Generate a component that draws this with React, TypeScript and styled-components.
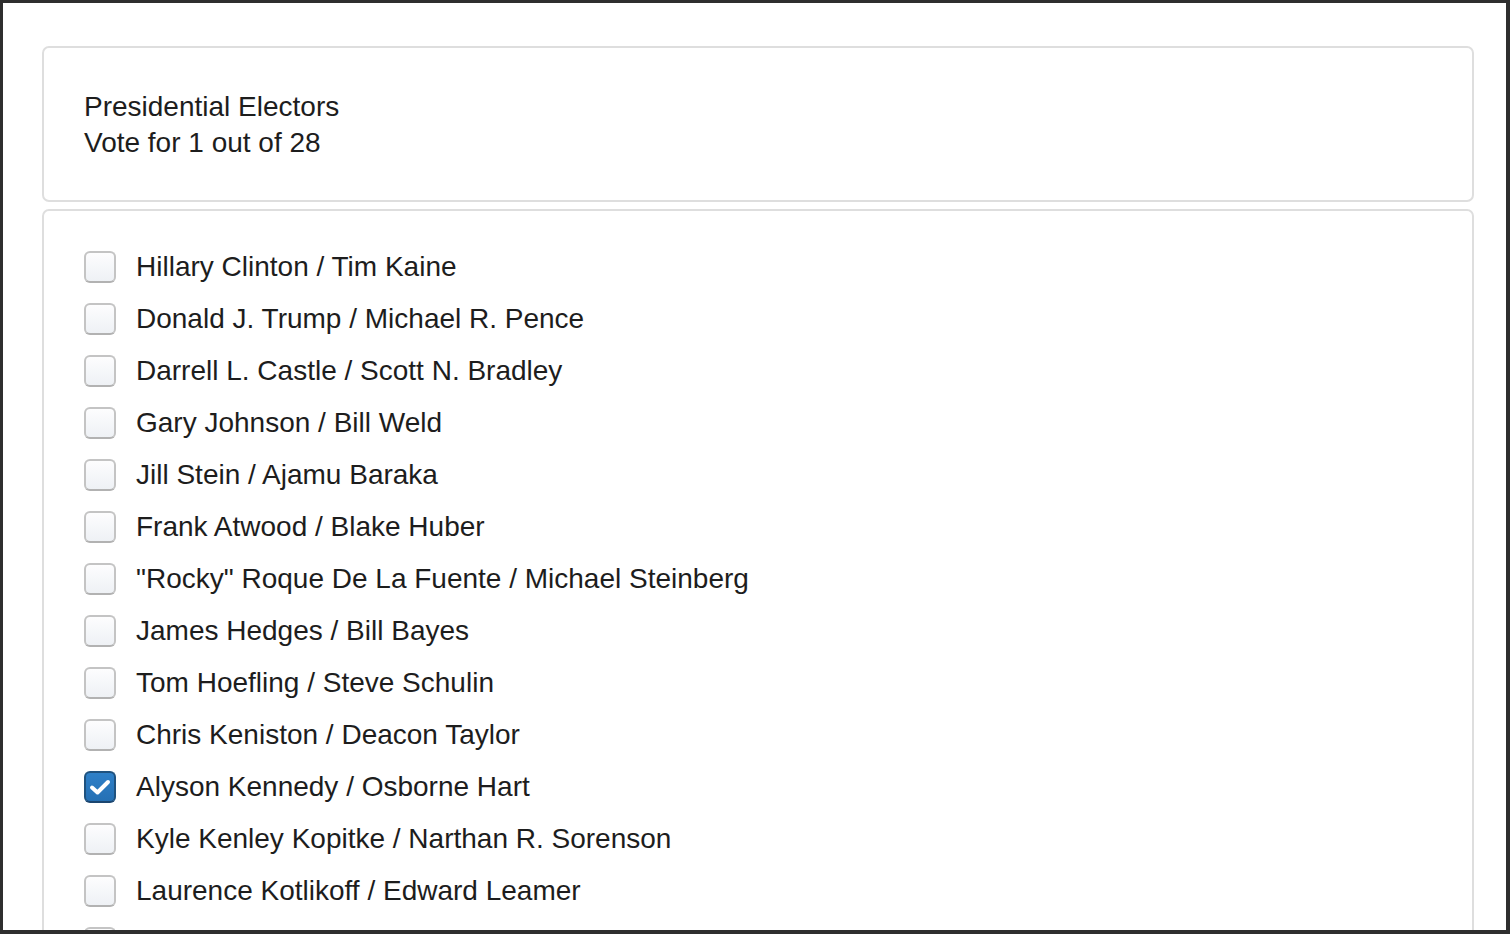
import React from "react";
import styled, { createGlobalStyle } from "styled-components";

const Global = createGlobalStyle`
  html, body { margin: 0; padding: 0; }
  body {
    background: #2e2e2e;
    font-family: "Liberation Sans", Arial, Helvetica, sans-serif;
    overflow: hidden;
  }
`;

const Frame = styled.div`
  margin: 3px 4px 0 3px;
  height: 927px;
  overflow: hidden;
  background: #ffffff;
  padding: 43px 32px 0 39px;
  box-sizing: border-box;
  display: flex;
  flex-direction: column;
  gap: 7px;
`;

const Card = styled.section`
  border: 2px solid #dedede;
  border-radius: 7px;
  background: #ffffff;
  padding: 40px 40px;
  flex-shrink: 0;
`;

const Header = styled.div`
  font-size: 28px;
  line-height: 36px;
  color: #1d1d1d;
  padding-top: 1px;
  margin-bottom: -1px;
`;

const List = styled.ul`
  list-style: none;
  margin: 0;
  padding: 0;
  display: flex;
  flex-direction: column;
  gap: 20px;
`;

const Row = styled.li`
  display: flex;
  align-items: center;
  gap: 20px;
  height: 32px;
`;

const Box = styled.span<{ $checked?: boolean }>`
  width: 32px;
  height: 32px;
  box-sizing: border-box;
  border-radius: 6px;
  flex-shrink: 0;
  display: flex;
  align-items: center;
  justify-content: center;
  border: 2px solid ${(p) => (p.$checked ? "#1f527f" : "#c4c4c4")};
  border-bottom-color: ${(p) => (p.$checked ? "#1b4670" : "#b2b2b2")};
  background: ${(p) =>
    p.$checked
      ? "linear-gradient(#2f80c8, #2570b4)"
      : "linear-gradient(#fdfdfe, #eef1f5)"};
`;

const Label = styled.span`
  font-size: 28px;
  line-height: 32px;
  color: #1d1d1d;
  white-space: nowrap;
`;

const candidates = [
  "Hillary Clinton / Tim Kaine",
  "Donald J. Trump / Michael R. Pence",
  "Darrell L. Castle / Scott N. Bradley",
  "Gary Johnson / Bill Weld",
  "Jill Stein / Ajamu Baraka",
  "Frank Atwood / Blake Huber",
  "\"Rocky\" Roque De La Fuente / Michael Steinberg",
  "James Hedges / Bill Bayes",
  "Tom Hoefling / Steve Schulin",
  "Chris Keniston / Deacon Taylor",
  "Alyson Kennedy / Osborne Hart",
  "Kyle Kenley Kopitke / Narthan R. Sorenson",
  "Laurence Kotlikoff / Edward Leamer",
  "Gloria La Riva / Dennis J. Banks",
];

const Check = () => (
  <svg width="26" height="26" viewBox="0 0 26 26">
    <polyline
      points="5,13.5 10.5,18.5 21,8"
      fill="none"
      stroke="#ffffff"
      strokeWidth="4"
      strokeLinecap="round"
      strokeLinejoin="round"
    />
  </svg>
);

export default function App() {
  return (
    <>
      <Global />
      <Frame>
        <Card>
          <Header>
            Presidential Electors
            <br />
            Vote for 1 out of 28
          </Header>
        </Card>
        <Card>
          <List>
            {candidates.map((c, i) => {
              const checked = i === 10;
              return (
                <Row key={c}>
                  <Box $checked={checked}>{checked && <Check />}</Box>
                  <Label>{c}</Label>
                </Row>
              );
            })}
          </List>
        </Card>
      </Frame>
    </>
  );
}
